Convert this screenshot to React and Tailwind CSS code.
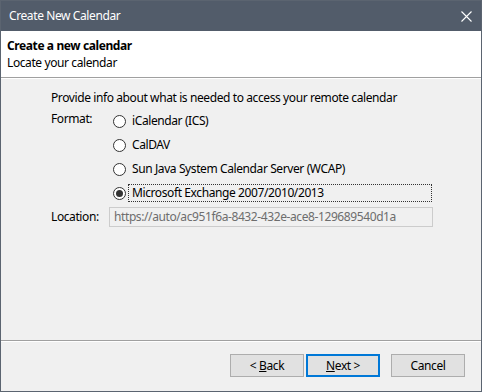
import React from "react";

const formats = [
  { label: "iCalendar (ICS)", checked: false },
  { label: "CalDAV", checked: false },
  { label: "Sun Java System Calendar Server (WCAP)", checked: false },
  { label: "Microsoft Exchange 2007/2010/2013", checked: true },
];

function Radio({ label, checked }) {
  return (
    <div className="flex h-[24px] items-center">
      <span className="flex h-[13px] w-[13px] items-center justify-center rounded-full border border-[#333333] bg-white">
        {checked && <span className="h-[7px] w-[7px] rounded-full bg-[#333333]" />}
      </span>
      <span
        className={
          "ml-[2px] flex h-[18px] w-[304px] items-center pl-[3px] border " +
          (checked ? "border-dotted border-[#333333]" : "border-transparent")
        }
      >
        {label}
      </span>
    </div>
  );
}

function Button({ children, primary }) {
  return (
    <button
      className={
        "flex h-[23px] w-[74px] items-center justify-center bg-[#e1e1e1] " +
        (primary ? "border-2 border-[#0078d7]" : "border border-[#adadad]")
      }
    >
      {children}
    </button>
  );
}

export default function App() {
  return (
    <div className="flex h-[392px] w-[482px] flex-col border border-[#5b6470] bg-[#f0f0f0] font-['Noto_Sans',sans-serif] text-[12px] leading-[16px] tracking-[-0.4px] text-black">
      {/* Title bar */}
      <div className="flex h-[30px] items-center justify-between bg-[#525c6a] pl-[8px] pr-[9px] text-white">
        <span>Create New Calendar</span>
        <svg width="11" height="11" viewBox="0 0 11 11">
          <path d="M0.5 0.5L10.5 10.5M10.5 0.5L0.5 10.5" stroke="#ffffff" strokeWidth="1.1" />
        </svg>
      </div>

      {/* Header */}
      <div className="h-[47px] border-b border-[#a0a0a0] bg-white pl-[6px] pt-[6px] leading-[17px]">
        <div className="font-bold">Create a new calendar</div>
        <div>Locate your calendar</div>
      </div>

      {/* Body */}
      <div className="flex-1 border-t border-white pl-[50px] pt-[11px]">
        <div>Provide info about what is needed to access your remote calendar</div>
        <div className="mt-[3px] flex">
          <div className="w-[62px] pt-[2px]">Format:</div>
          <div className="flex flex-col">
            {formats.map((f) => (
              <Radio key={f.label} label={f.label} checked={f.checked} />
            ))}
          </div>
        </div>
        <div className="mt-[2px] flex items-center">
          <div className="w-[58px]">Location:</div>
          <div className="flex h-[20px] w-[324px] items-center border border-[#cccccc] bg-[#f0f0f0] pl-[4px] text-[#6d6d6d]">
            https://auto/ac951f6a-8432-432e-ace8-129689540d1a
          </div>
        </div>
      </div>

      {/* Footer */}
      <div className="h-[51px] border-t border-[#a0a0a0]">
        <div className="flex h-full justify-end border-t border-white pr-[16px] pt-[12px]">
          <Button>
            &lt;&nbsp;<span className="underline">B</span>ack
          </Button>
          <div className="ml-[2px]">
            <Button primary>
              <span className="underline">N</span>ext &gt;
            </Button>
          </div>
          <div className="ml-[11px]">
            <Button>Cancel</Button>
          </div>
        </div>
      </div>
    </div>
  );
}
